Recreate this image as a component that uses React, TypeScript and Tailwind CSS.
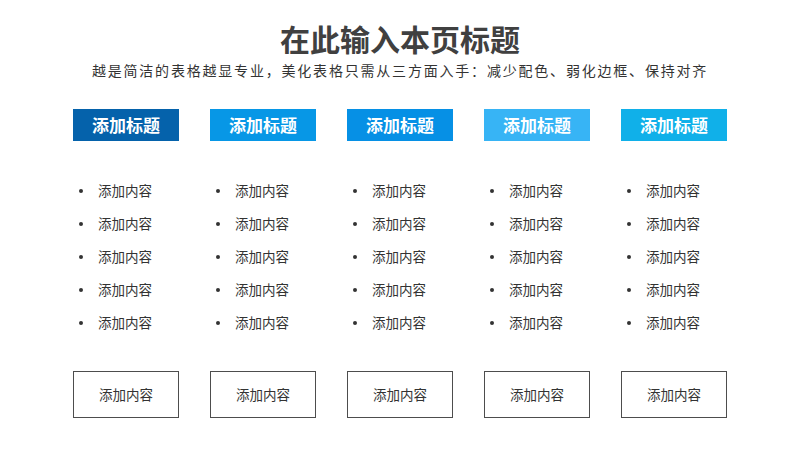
const headers = ["#0562ab", "#0797e6", "#0690e5", "#37b4f5", "#10b0e9"];
const rows = [0, 1, 2, 3, 4];

export default function App() {
	return (
		<div
			className="w-[800px] h-[450px] bg-white flex flex-col items-center overflow-hidden text-[#333333]"
			style={{ fontFamily: '"Noto Sans CJK SC", "Noto Sans", sans-serif' }}
		>
			<h1 className="pt-[18px] h-[58px] text-[30px] leading-[40px] font-bold text-[#404040]">
				在此输入本页标题
			</h1>
			<p className="mt-[2px] text-[14px] leading-[20px] tracking-[1.8px] text-[#333333]">
				越是简洁的表格越显专业，美化表格只需从三方面入手：减少配色、弱化边框、保持对齐
			</p>

			<div className="mt-[29px] flex gap-[31px]">
				{headers.map((color) => (
					<Column key={color} color={color} />
				))}
			</div>
		</div>
	);
}

function Column({ color }: { color: string }) {
	return (
		<div className="w-[106px] flex flex-col">
			<div
				className="h-[32px] flex items-center justify-center text-white font-bold text-[17px]"
				style={{ backgroundColor: color }}
			>
				添加标题
			</div>

			<ul className="mt-[33px] flex flex-col">
				{rows.map((r) => (
					<li key={r} className="h-[33px] flex items-center text-[13.5px]">
						<span className="w-[4px] h-[4px] rounded-full bg-[#333333] ml-[6px]" />
						<span className="ml-[15px]">添加内容</span>
					</li>
				))}
			</ul>

			<div className="mt-[32px] h-[47px] border-[1.5px] border-[#4d4d4d] flex items-center justify-center text-[13.5px]">
				添加内容
			</div>
		</div>
	);
}
